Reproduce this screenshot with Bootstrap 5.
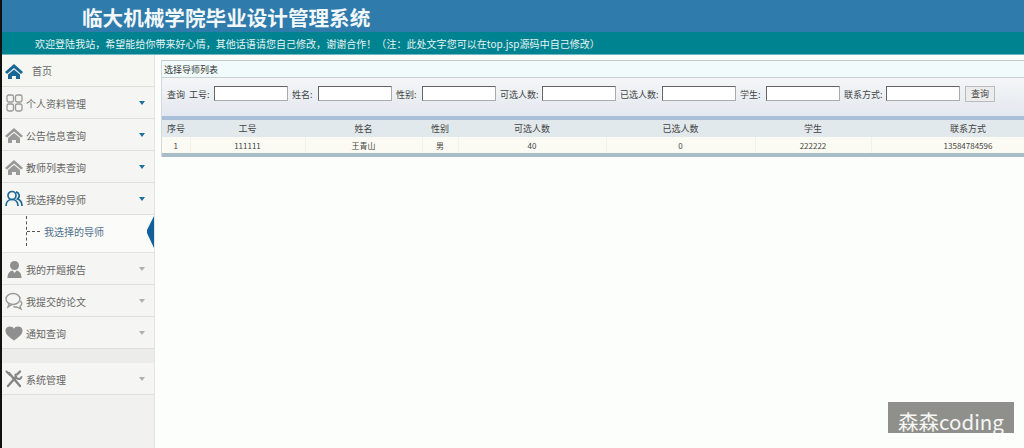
<!DOCTYPE html>
<html lang="zh">
<head>
<meta charset="utf-8">
<title>临大机械学院毕业设计管理系统</title>
<link href="https://cdn.jsdelivr.net/npm/bootstrap@5.3.0/dist/css/bootstrap.min.css" rel="stylesheet">
<style>
html,body{height:100%;}
body{width:1024px;height:448px;overflow:hidden;border-left:2px solid #111;background:#fcfefb;font-family:"Noto Sans CJK SC","Liberation Sans",sans-serif;font-size:9px;color:#333;position:relative;}
.top-title{height:32px;background:#2f7bab;color:#f2f7fa;font-family:"Noto Sans CJK SC",sans-serif;font-size:20.6px;font-weight:700;line-height:34px;padding-left:80px;white-space:nowrap;}
.top-note{height:23px;background:#008390;color:#e6f4f4;font-size:10px;letter-spacing:.04px;line-height:24px;padding-left:33px;white-space:nowrap;border-bottom:1px solid #6fb8c4;}
.page-body{height:393px;}
.side{width:153px;flex:none;background:#f3f3f1;border-right:1px solid #e3e3e1;}
.side-item{height:32px;border-bottom:1px solid #dfdfdc;font-size:10px;color:#666;padding-left:2px;padding-right:8px;background:#f5f5f3;}
.side-item svg{width:20px;height:20px;flex:none;}
.side-item .label{margin-left:2px;padding-top:2px;flex:1;white-space:nowrap;}
.side-home{background:#f6f7f3;}
.side-home .label{margin-left:8px;padding-top:0;}
.tri{width:0;height:0;border-left:3.5px solid transparent;border-right:3.5px solid transparent;border-top:4px solid #1f6f9f;margin-right:1px;}
.tri-grey{border-top-color:#b0b0b0;}
.side-sub{height:38px;background:#fbfcfa;border-bottom:1px solid #e3e3e1;position:relative;padding:0 0 4px 42px;font-size:10px;color:#52708c;}
.sub-line{position:absolute;left:24px;top:1px;height:30px;border-left:1px dashed #555;}
.sub-dash{position:absolute;left:25px;top:16px;width:13px;border-top:1px dashed #555;}
.sub-arrow{position:absolute;right:0;top:1px;width:8px;height:32px;}
.side-gap{height:14px;background:#ececea;}
.side-rest{background:#f1f1ef;}
.main-pane{padding:5px 0 0 6px;min-width:0;overflow:hidden;}
.panel-box{width:920px;border-left:1px solid #d3dadd;border-top:1px solid #c4c9c8;}
.panel-head{height:17px;background:#f1fbfb;border-bottom:1px solid #c8d0d4;color:#333;line-height:18px;padding-left:2px;font-size:9px;}
.filter{height:38px;background:linear-gradient(#f4f6f7,#e3e8f0);padding:8px 0 0 5px;white-space:nowrap;color:#444;line-height:17px;}
.filter span{flex:none;}
.lead-word{margin-right:4px;}
.cap-first{width:25px;}
.cap-two{width:26px;}
.cap-four{width:42px;}
.filter input{width:74px;height:15px;border:1px solid #666;border-right-color:#aaa;border-bottom-color:#aaa;background:#fff;padding:0;margin-right:4px;flex:none;}
.filter button{width:30px;height:16px;border:1px solid #bbb;background:#ececec;color:#444;font-size:9px;line-height:14px;padding:0;margin-left:1px;}
.bar-a{height:4px;background:#a9bfd8;}
.bar-b{height:4px;background:#a9bdc9;}
.grid-tbl{table-layout:fixed;width:903px;margin:0;border-collapse:collapse;font-size:9px;text-align:center;}
.grid-tbl th{height:17px;background:#e2e9ec;font-weight:400;color:#444;padding:0;line-height:17px;border:0;}
.grid-tbl td{height:16px;background:#fbfbf3;color:#444;padding:0;font-size:8px;line-height:15px;border:0;border-right:1px solid #f0f2ec;}
.stamp{position:absolute;left:886px;top:402px;width:126px;height:31px;background:#8f908c;color:#f6f6f4;font-size:20.5px;line-height:38px;text-align:center;overflow:hidden;white-space:nowrap;}
</style>
</head>
<body>
<div class="top-title">临大机械学院毕业设计管理系统</div>
<div class="top-note">欢迎登陆我站，希望能给你带来好心情，其他话语请您自己修改，谢谢合作！（注：此处文字您可以在top.jsp源码中自己修改）</div>
<div class="page-body d-flex">
  <nav class="side d-flex flex-column">
    <div class="side-item side-home d-flex align-items-center">
      <svg viewBox="0 0 20 20"><path d="M10 3 1 11l2 2 7-6 7 6 2-2z" fill="#1a6796"/><path d="M4 13.5 10 8.5l6 5V18h-4v-3H8v3H4z" fill="#1a6796"/></svg>
      <span class="label">首页</span>
    </div>
    <div class="side-item d-flex align-items-center">
      <svg viewBox="0 0 20 20" fill="none" stroke="#999" stroke-width="1.3"><rect x="3" y="2" width="6.5" height="7" rx="1.8"/><rect x="11.5" y="2" width="6.5" height="7" rx="1.8"/><rect x="3" y="11" width="6.5" height="7" rx="1.8"/><rect x="11.5" y="11" width="6.5" height="7" rx="1.8"/></svg>
      <span class="label">个人资料管理</span><i class="tri"></i>
    </div>
    <div class="side-item d-flex align-items-center">
      <svg viewBox="0 0 20 20"><path d="M10 3 1 11l2 1.500 7-6 7 6 2-1.500z" fill="#999"/><path d="M4 13 10 8l6 5v5h-4v-3H8v3H4z" fill="#999"/></svg>
      <span class="label">公告信息查询</span><i class="tri"></i>
    </div>
    <div class="side-item d-flex align-items-center">
      <svg viewBox="0 0 20 20"><path d="M10 3 1 11l2 1.500 7-6 7 6 2-1.500z" fill="#999"/><path d="M4 13 10 8l6 5v5h-4v-3H8v3H4z" fill="#999"/></svg>
      <span class="label">教师列表查询</span><i class="tri"></i>
    </div>
    <div class="side-item d-flex align-items-center">
      <svg viewBox="0 0 20 20" fill="none" stroke="#1a6796" stroke-width="1.700"><circle cx="8" cy="6.500" r="4"/><path d="M2 17c0-4 2.500-6.500 6-6.500s6 2.500 6 6.500"/><path d="M12 2.800a4 4 0 0 1 1.500 7.200c2.500.8 4.500 3 4.500 7"/></svg>
      <span class="label">我选择的导师</span><i class="tri"></i>
    </div>
    <div class="side-sub d-flex align-items-center">
      <i class="sub-line"></i><i class="sub-dash"></i>
      <span>我选择的导师</span>
      <svg class="sub-arrow" viewBox="0 0 8 32"><path d="M8 0 1 14v3l7 15z" fill="#135f99"/></svg>
    </div>
    <div class="side-item d-flex align-items-center">
      <svg viewBox="0 0 20 20"><circle cx="10.500" cy="6.500" r="4.500" fill="#8f8f8f"/><path d="M3.500 19c0-4.500 2-7 5-7.500l2 2.500 2-2.500c3 .5 5 3 5 7.500z" fill="#8f8f8f"/></svg>
      <span class="label">我的开题报告</span><i class="tri tri-grey"></i>
    </div>
    <div class="side-item d-flex align-items-center">
      <svg viewBox="0 0 20 20" fill="none" stroke="#999" stroke-width="1.400"><ellipse cx="9" cy="8" rx="7" ry="5.500"/><path d="M5 13l-1 3 4-2.500"/><path d="M16.500 10c2 2 1.500 4-.5 5.500l1 2.500-4-1.800c-1.500 0-2.500-.2-3.500-.7"/></svg>
      <span class="label">我提交的论文</span><i class="tri tri-grey"></i>
    </div>
    <div class="side-item d-flex align-items-center">
      <svg viewBox="0 0 20 20"><path d="M10 17.500C5 14 1.500 11.500 1.500 7.500 1.500 5 3.500 3.500 6 3.500c1.800 0 3.200.8 4 2.200.8-1.400 2.200-2.200 4-2.200 2.500 0 4.500 1.500 4.500 4 0 4-3.500 6.500-8.500 10z" fill="#8f8f8f"/></svg>
      <span class="label">通知查询</span><i class="tri tri-grey"></i>
    </div>
    <div class="side-gap"></div>
    <div class="side-item d-flex align-items-center">
      <svg viewBox="0 0 20 20" fill="none" stroke="#858585" stroke-linecap="round"><path d="M5 4 16 17" stroke-width="2.400"/><path d="M2.500 2.500 6 6" stroke-width="2"/><path d="M4 17 12 8" stroke-width="2.400"/><path d="M11.500 5.500a3.500 3.500 0 0 0 5 4l1-1.500" stroke-width="2"/><path d="M16 2.500l-3 3" stroke-width="2.400"/></svg>
      <span class="label">系统管理</span><i class="tri tri-grey"></i>
    </div>
    <div class="side-rest flex-grow-1"></div>
  </nav>
  <main class="main-pane flex-grow-1">
    <div class="panel-box">
      <div class="panel-head">选择导师列表</div>
      <form class="filter d-flex align-items-start">
        <span class="lead-word">查询</span><span class="cap-first">工号:</span><input type="text">
        <span class="cap-two">姓名:</span><input type="text">
        <span class="cap-two">性别:</span><input type="text">
        <span class="cap-four">可选人数:</span><input type="text">
        <span class="cap-four">已选人数:</span><input type="text">
        <span class="cap-two">学生:</span><input type="text">
        <span class="cap-four">联系方式:</span><input type="text">
        <button type="button">查询</button>
      </form>
      <div class="bar-a"></div>
      <table class="grid-tbl">
        <colgroup><col style="width:28px"><col style="width:115px"><col style="width:117px"><col style="width:36px"><col style="width:148px"><col style="width:149px"><col style="width:116px"><col style="width:194px"></colgroup>
        <thead><tr><th>序号</th><th>工号</th><th>姓名</th><th>性别</th><th>可选人数</th><th>已选人数</th><th>学生</th><th>联系方式</th></tr></thead>
        <tbody><tr><td>1</td><td>111111</td><td>王青山</td><td>男</td><td>40</td><td>0</td><td>222222</td><td>13584784596</td></tr></tbody>
      </table>
      <div class="bar-b"></div>
    </div>
  </main>
</div>
<div class="stamp">森森coding</div>
</body>
</html>
